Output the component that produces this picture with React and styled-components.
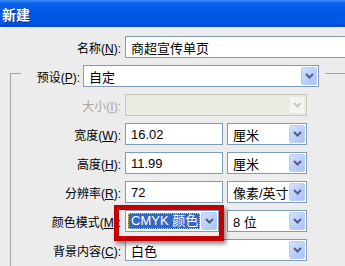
import styled, { createGlobalStyle } from 'styled-components';

const GlobalStyle = createGlobalStyle`
  html, body {
    margin: 0;
    padding: 0;
    background: #ececec;
    overflow: hidden;
  }
  body {
    font-family: "Liberation Sans", "Noto Sans CJK SC", sans-serif;
    font-size: 12px;
    color: #000;
  }
`;

function Chevron({ disabled }) {
  return (
    <svg width='9' height='6' viewBox='0 0 9 6'>
      <polyline
        points='1,1 4.5,4.5 8,1'
        fill='none'
        stroke={disabled ? '#c9c7ba' : '#4d6185'}
        strokeWidth='2'
      />
    </svg>
  );
}

function Combo({ value, width, disabled, focused, ml }) {
  return (
    <ComboBox $w={width} $disabled={disabled} $ml={ml}>
      {focused ? (
        <Highlight>{value}</Highlight>
      ) : (
        <ComboText>{value}</ComboText>
      )}
      <DropButton $disabled={disabled}>
        <Chevron disabled={disabled} />
      </DropButton>
    </ComboBox>
  );
}

export default function App() {
  return (
    <>
      <GlobalStyle />
      <Window>
        <TitleBar>新建</TitleBar>
        <Body>
          <Row>
            <Label $w={121}>
              名称(<u>N</u>):
            </Label>
            <TextBox $w={240}>商超宣传单页</TextBox>
          </Row>

          <Group>
            <GroupHeader>
              <Corner />
              <Label $w={47} $ml={12}>
                预设(<u>P</u>):
              </Label>
              <Combo value='自定' width={236} ml={3} />
              <TopLine />
            </GroupHeader>

            <GroupBody>
              <Row>
                <Label $w={110} $disabled>
                  大小(<u>I</u>):
                </Label>
                <Combo value='' width={182} disabled />
              </Row>
              <Row>
                <Label $w={110}>
                  宽度(<u>W</u>):
                </Label>
                <TextBox $w={98}>16.02</TextBox>
                <Combo value='厘米' width={80} />
              </Row>
              <Row>
                <Label $w={110}>
                  高度(<u>H</u>):
                </Label>
                <TextBox $w={98}>11.99</TextBox>
                <Combo value='厘米' width={80} />
              </Row>
              <Row>
                <Label $w={110}>
                  分辨率(<u>R</u>):
                </Label>
                <TextBox $w={98}>72</TextBox>
                <Combo value='像素/英寸' width={80} />
              </Row>
              <Row>
                <Label $w={110}>
                  颜色模式(<u>M</u>):
                </Label>
                <Marked>
                  <Combo value='CMYK 颜色' width={94} focused />
                  <RedFrame />
                </Marked>
                <Combo value='8 位' width={80} ml={4} />
              </Row>
              <Row>
                <Label $w={110}>
                  背景内容(<u>C</u>):
                </Label>
                <Combo value='白色' width={182} />
              </Row>
            </GroupBody>
          </Group>
        </Body>
      </Window>
    </>
  );
}

const Window = styled.div`
  width: 345px;
  height: 266px;
  overflow: hidden;
  background: #ececec;
`;

const TitleBar = styled.div`
  height: 27px;
  display: flex;
  align-items: center;
  padding-left: 2px;
  color: #fff;
  font-family: "Noto Sans CJK SC", sans-serif;
  font-weight: bold;
  font-size: 14px;
  text-shadow: 1px 1px 0 #0b2a86;
  background: linear-gradient(
    to bottom,
    #3d8ef6 0%,
    #0a62ea 12%,
    #0056e4 45%,
    #0059e8 80%,
    #0047c8 100%
  );
`;

const Body = styled.div`
  padding-top: 9px;
  display: flex;
  flex-direction: column;
  gap: 7px;
`;

const Row = styled.div`
  display: flex;
  align-items: center;
  height: 22px;
  gap: 4px;
  white-space: nowrap;
`;

const Label = styled.div`
  flex: 0 0 ${(p) => p.$w}px;
  margin-left: ${(p) => p.$ml || 0}px;
  text-align: right;
  font-size: 12px;
  color: ${(p) => (p.$disabled ? '#aca899' : '#000')};

  u {
    text-underline-offset: 1px;
  }
`;

const TextBox = styled.div`
  flex: 0 0 ${(p) => p.$w}px;
  height: 22px;
  box-sizing: border-box;
  border: 1px solid #7f9db9;
  background: #fff;
  padding-left: 5px;
  display: flex;
  align-items: center;
  font-size: 13px;
  font-family: "Liberation Sans", "Noto Sans CJK SC", sans-serif;
`;

const ComboBox = styled.div`
  flex: 0 0 ${(p) => p.$w}px;
  margin-left: ${(p) => p.$ml || 0}px;
  height: 22px;
  box-sizing: border-box;
  border: 1px solid ${(p) => (p.$disabled ? '#c9c7ba' : '#7f9db9')};
  background: ${(p) => (p.$disabled ? '#ebebe4' : '#fff')};
  display: flex;
  align-items: center;
  font-size: 13px;
`;

const ComboText = styled.span`
  flex: 1;
  padding-left: 5px;
  overflow: hidden;
`;

const Highlight = styled.span`
  flex: 1;
  margin: 0 1px 0 2px;
  height: 16px;
  line-height: 16px;
  padding-left: 3px;
  background: #316ac5;
  color: #fff;
  outline: 1px dotted #e8d070;
  outline-offset: -1px;
  overflow: hidden;
`;

const DropButton = styled.div`
  flex: 0 0 16px;
  height: 18px;
  margin: 0 1px 0 0;
  box-sizing: border-box;
  border-radius: 2px;
  display: flex;
  align-items: center;
  justify-content: center;
  border: 1px solid ${(p) => (p.$disabled ? '#e9e8e1' : '#bacdf6')};
  background: ${(p) =>
    p.$disabled
      ? '#f5f4ef'
      : 'linear-gradient(135deg, #d5e1fd 0%, #bcd0fb 50%, #a9c2f6 100%)'};
`;

const Group = styled.div`
  margin-left: 10px;
  display: flex;
  flex-direction: column;
`;

const GroupHeader = styled.div`
  display: flex;
  height: 22px;
  align-items: center;
  white-space: nowrap;
`;

const Corner = styled.div`
  flex: 0 0 10px;
  align-self: stretch;
  margin-top: 8px;
  border-top: 1px solid #a5a5a5;
  border-left: 1px solid #a5a5a5;
`;

const TopLine = styled.div`
  flex: 1;
  align-self: flex-start;
  margin-top: 8px;
  margin-left: 6px;
  border-top: 1px solid #a5a5a5;
`;

const GroupBody = styled.div`
  border-left: 1px solid #a5a5a5;
  padding-top: 7px;
  padding-bottom: 20px;
  display: flex;
  flex-direction: column;
  gap: 7px;
`;

const Marked = styled.div`
  position: relative;
  display: flex;
`;

const RedFrame = styled.div`
  position: absolute;
  left: -11px;
  top: -5px;
  right: -5px;
  bottom: -9px;
  border: 5px solid #c30000;
  box-shadow: 2px 3px 4px rgba(0, 0, 0, 0.45);
  pointer-events: none;
`;
